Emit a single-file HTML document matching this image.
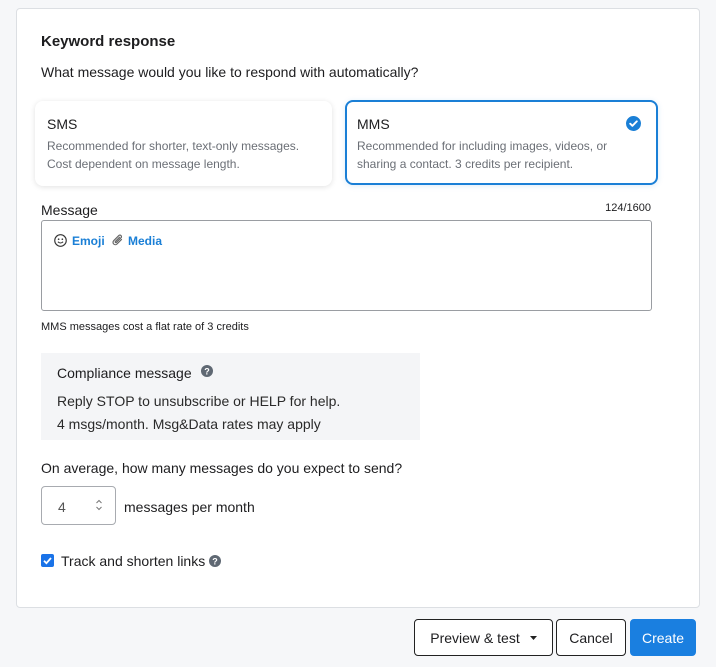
<!DOCTYPE html>
<html><head><meta charset="utf-8"><style>
*{box-sizing:border-box;margin:0;padding:0}
body{width:716px;height:667px;background:#f6f7f9;font-family:"Liberation Sans",Arial,sans-serif;color:#1d1d1f;position:relative;overflow:hidden}
.a{position:absolute}
.card{left:16px;top:8px;width:684px;height:600px;background:#fff;border:1px solid #dcdfe3;border-radius:4px}
.opt{border-radius:8px;background:#fff}
.t14{font-size:14px}
.desc{font-size:12px;color:#6b6f76;line-height:18px}
.blue{color:#1a7fd6;font-weight:bold;font-size:12px}
.btn{top:619px;height:37px;border:1px solid #222;border-radius:4px;background:#fff;font-size:14px;display:flex;align-items:center;justify-content:center}
</style></head><body>
<div class="a card"></div>
<div class="a" style="left:41px;top:33px;font-size:15px;font-weight:bold">Keyword response</div>
<div class="a t14" style="left:41px;top:64px">What message would you like to respond with automatically?</div>

<div class="a opt" style="left:35px;top:101px;width:297px;height:85px;box-shadow:0 1px 6px rgba(0,0,0,.12)"></div>
<div class="a t14" style="left:47px;top:116px">SMS</div>
<div class="a desc" style="left:47px;top:137px">Recommended for shorter, text-only messages.<br>Cost dependent on message length.</div>

<div class="a opt" style="left:345px;top:100px;width:313px;height:85px;border:2px solid #1a7fd6;box-shadow:0 1px 6px rgba(26,127,214,.15)"></div>
<div class="a t14" style="left:357px;top:116px">MMS</div>
<svg class="a" style="left:626px;top:116px" width="15" height="15" viewBox="0 0 16 16"><circle cx="8" cy="8" r="8" fill="#1a7fd6"/><path d="M4.5 8.2l2.3 2.3 4.7-4.8" stroke="#fff" stroke-width="2" fill="none" stroke-linecap="round" stroke-linejoin="round"/></svg>
<div class="a desc" style="left:357px;top:137px">Recommended for including images, videos, or<br>sharing a contact. 3 credits per recipient.</div>

<div class="a t14" style="left:41px;top:202px">Message</div>
<div class="a" style="right:65px;top:202px;font-size:11px">124/1600</div>
<div class="a" style="left:41px;top:220px;width:611px;height:91px;border:1px solid #9a9da2;border-radius:3px"></div>
<svg class="a" style="left:54px;top:234px" width="13" height="13" viewBox="0 0 14 14"><circle cx="7" cy="7" r="6.2" fill="none" stroke="#333" stroke-width="1.2"/><circle cx="5" cy="5.6" r=".9" fill="#333"/><circle cx="9" cy="5.6" r=".9" fill="#333"/><path d="M4.2 8.3q2.8 2.8 5.6 0" stroke="#333" stroke-width="1.1" fill="none"/></svg>
<div class="a blue" style="left:72px;top:234px">Emoji</div>
<svg class="a" style="left:112px;top:234px" width="12" height="13" viewBox="0 0 12 13"><path d="M9.5 5.5L5 10a2.3 2.3 0 0 1-3.3-3.3L6.8 1.6a1.5 1.5 0 0 1 2.2 2.2L4.4 8.4a.7.7 0 0 1-1-1L7.5 3.3" stroke="#666" stroke-width="1.2" fill="none" stroke-linecap="round"/></svg>
<div class="a blue" style="left:128px;top:234px">Media</div>
<div class="a" style="left:41px;top:321px;font-size:11px">MMS messages cost a flat rate of 3 credits</div>

<div class="a" style="left:41px;top:353px;width:379px;height:87px;background:#f4f5f7"></div>
<div class="a t14" style="left:57px;top:365px">Compliance message</div>
<svg class="a" style="left:201px;top:365px" width="12" height="12" viewBox="0 0 12 12"><circle cx="6" cy="6" r="6" fill="#5f6873"/><text x="6" y="9.3" font-size="9" font-weight="bold" fill="#fff" text-anchor="middle" font-family="Liberation Sans">?</text></svg>
<div class="a t14" style="left:57px;top:393px;color:#2a2a2a">Reply STOP to unsubscribe or HELP for help.</div>
<div class="a t14" style="left:57px;top:416px;color:#2a2a2a">4 msgs/month. Msg&amp;Data rates may apply</div>

<div class="a t14" style="left:41px;top:460px">On average, how many messages do you expect to send?</div>
<div class="a" style="left:41px;top:486px;width:75px;height:39px;border:1px solid #a8abb0;border-radius:4px"></div>
<div class="a t14" style="left:58px;top:499px;color:#555">4</div>
<svg class="a" style="left:95px;top:499px" width="8" height="12" viewBox="0 0 8 12"><path d="M1.5 4L4 1.5 6.5 4M1.5 8L4 10.5 6.5 8" stroke="#777" fill="none"/></svg>
<div class="a t14" style="left:124px;top:499px">messages per month</div>

<div class="a" style="left:41px;top:554px;width:13px;height:13px;background:#1a73e8;border-radius:2px"></div>
<svg class="a" style="left:41px;top:554px" width="13" height="13" viewBox="0 0 13 13"><path d="M3 6.8l2.4 2.4L10 4" stroke="#fff" stroke-width="1.8" fill="none"/></svg>
<div class="a t14" style="left:61px;top:553px">Track and shorten links</div>
<svg class="a" style="left:209px;top:555px" width="12" height="12" viewBox="0 0 12 12"><circle cx="6" cy="6" r="6" fill="#5f6873"/><text x="6" y="9.3" font-size="9" font-weight="bold" fill="#fff" text-anchor="middle" font-family="Liberation Sans">?</text></svg>

<div class="a btn" style="left:414px;width:139px">Preview &amp; test<svg style="margin-left:10px" width="7" height="4" viewBox="0 0 7 4"><path d="M0 0h7L3.5 4z" fill="#222"/></svg></div>
<div class="a btn" style="left:556px;width:70px">Cancel</div>
<div class="a btn" style="left:630px;width:66px;background:#1a7fe0;border-color:#1a7fe0;color:#fff">Create</div>
</body></html>
